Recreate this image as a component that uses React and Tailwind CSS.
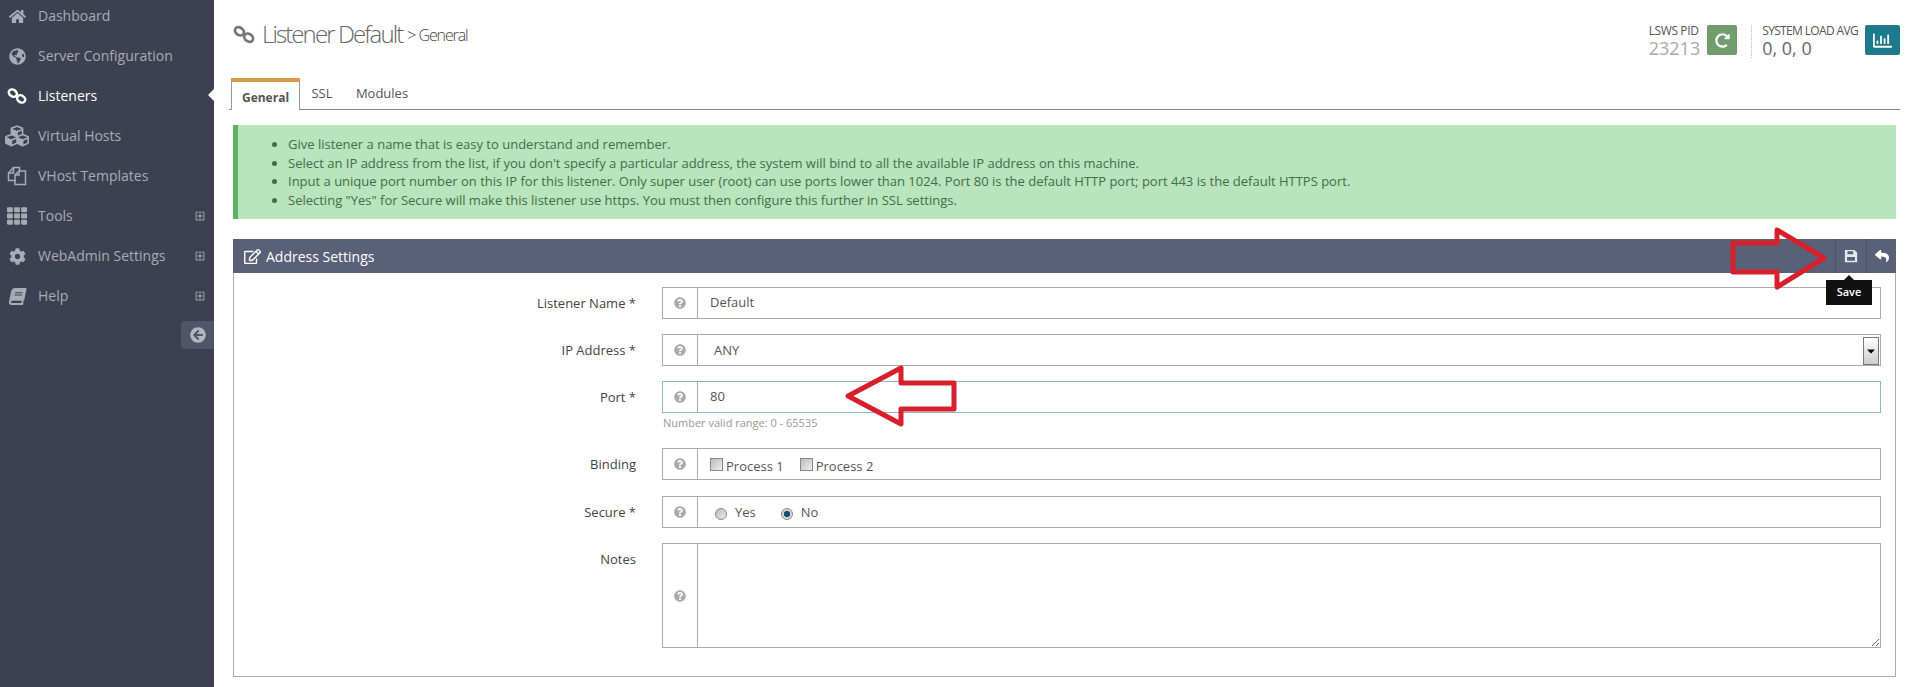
import {
  FaHome, FaGlobeAmericas, FaCubes, FaTh, FaCog, FaBook,
  FaRegPlusSquare, FaArrowCircleLeft, FaRedoAlt, FaRegChartBar, FaRegEdit,
  FaReply, FaQuestionCircle, FaCaretDown,
} from 'react-icons/fa'

// Chain running top-left to bottom-right, the package's link icon leans the other way
function ChainIcon({ className }) {
  return (
    <svg className={className} viewBox="0 0 24 20" fill="none" stroke="currentColor" strokeWidth="3">
      <ellipse cx="7" cy="6.5" rx="5.2" ry="4" transform="rotate(35 7 6.5)" />
      <ellipse cx="17" cy="13.5" rx="5.2" ry="4" transform="rotate(35 17 13.5)" />
    </svg>
  )
}

function TemplatesIcon({ className }) {
  return (
    <svg className={className} viewBox="0 0 20 20" fill="none" stroke="currentColor" strokeWidth="1.5">
      <path d="M9 14.5 H1.5 V7 L6.5 1.5 H12.5 V5" />
      <path d="M1.5 7 H6.5 V1.5" />
      <path d="M8 9 L12 5 H18.5 V18.5 H8 Z" />
      <path d="M8 9 H12 V5" />
    </svg>
  )
}

function SaveIcon({ className }) {
  return (
    <svg className={className} viewBox="0 0 16 16" fill="currentColor" fillRule="evenodd">
      <path d="M1 1 H12 L15 4 V15 H1 Z M4 2.5 V6 H10.5 V2.5 Z M3.5 9 V13.5 H12.5 V9 Z" />
    </svg>
  )
}

const NAV_ITEMS = [
  { label: 'Dashboard', icon: FaHome, size: 'text-[17px]' },
  { label: 'Server Configuration', icon: FaGlobeAmericas, size: 'text-[17px]' },
  { label: 'Listeners', icon: ChainIcon, size: 'w-[20px] h-[18px]', active: true },
  { label: 'Virtual Hosts', icon: FaCubes, size: 'text-[24px]' },
  { label: 'VHost Templates', icon: TemplatesIcon, size: 'w-[20px] h-[20px]' },
  { label: 'Tools', icon: FaTh, size: 'text-[20px]', expand: true },
  { label: 'WebAdmin Settings', icon: FaCog, size: 'text-[17px]', expand: true },
  { label: 'Help', icon: FaBook, size: 'text-[17px] -skew-x-12', expand: true },
]

const TIPS = [
  'Give listener a name that is easy to understand and remember.',
  "Select an IP address from the list, if you don't specify a particular address, the system will bind to all the available IP address on this machine.",
  'Input a unique port number on this IP for this listener. Only super user (root) can use ports lower than 1024. Port 80 is the default HTTP port; port 443 is the default HTTPS port.',
  'Selecting "Yes" for Secure will make this listener use https. You must then configure this further in SSL settings.',
]

function Sidebar() {
  return (
    <aside className="w-[214px] shrink-0 bg-[#3c4051] h-[687px] overflow-hidden relative">
      <ul className="-mt-1">
        {NAV_ITEMS.map((item) => {
          const Icon = item.icon
          return (
            <li key={item.label} className={`relative flex items-center h-10 ${item.active ? 'text-white' : 'text-[#a9acb5]'}`}>
              <span className="w-[38px] shrink-0 flex justify-center pr-[4px]">
                <Icon className={item.size} />
              </span>
              <span className="text-[14px] leading-none">{item.label}</span>
              {item.expand && <FaRegPlusSquare className="absolute left-[195px] text-[10px]" />}
              {item.active && (
                <span className="absolute right-0 top-[13px] border-y-[6px] border-r-[6px] border-y-transparent border-r-white" />
              )}
            </li>
          )
        })}
      </ul>
      <div className="flex justify-end mt-[5px]">
        <div className="w-[33px] h-[28px] bg-[#50556a] rounded-l flex items-center justify-center text-[#b4b7c0]">
          <FaArrowCircleLeft className="text-[16px]" />
        </div>
      </div>
    </aside>
  )
}

function TopStats() {
  return (
    <div className="flex items-start pt-[25px] -mr-[4px]">
      <div className="mr-[7px]">
        <div className="text-[12px] leading-[12px] text-[#555] -tracking-[0.4px]">LSWS PID</div>
        <div className="text-[18px] leading-[22px] text-[#aaa]">23213</div>
      </div>
      <div className="w-[30px] h-[30px] bg-[#6f9e6c] rounded-[2px] flex items-center justify-center text-white">
        <FaRedoAlt className="text-[15px]" />
      </div>
      <div className="w-0 h-[33px] border-l border-dotted border-[#bbb] ml-[14px] mr-[10px]" />
      <div className="mr-[7px]">
        <div className="text-[12px] leading-[12px] text-[#555] -tracking-[0.65px]">SYSTEM LOAD AVG</div>
        <div className="text-[18px] leading-[22px] text-[#666]">0, 0, 0</div>
      </div>
      <div className="w-[35px] h-[30px] bg-[#1e7b8e] rounded-[2px] flex items-center justify-center text-white">
        <FaRegChartBar className="text-[19px]" />
      </div>
    </div>
  )
}

function HelpAddon() {
  return (
    <span className="w-[35px] shrink-0 flex items-center justify-center text-[#aaa] border-r border-[#aaa]">
      <FaQuestionCircle className="text-[12px]" />
    </span>
  )
}

function Field({ label, children, focused, hint, tall, gap = 'mb-[15px]' }) {
  return (
    <div className={`flex ${gap}`}>
      <label className="w-[402px] shrink-0 text-right text-[13px] text-[#444] pt-[6px] leading-[20px]">{label}</label>
      <div className="flex-1 ml-[26px]">
        <div className={`flex border ${focused ? 'border-[#8db8c9]' : 'border-[#aaa]'} bg-white ${tall ? 'h-[105px]' : 'h-[32px]'}`}>
          <HelpAddon />
          {children}
        </div>
        {hint && <div className="text-[11px] text-[#999] leading-[20px] pl-[1px]">{hint}</div>}
      </div>
    </div>
  )
}

function AddressPanel() {
  return (
    <section className="mt-[20px] border border-[#aab] border-t-0 relative">
      <header className="h-[34px] bg-[#5a6078] flex items-center text-white -mx-px">
        <FaRegEdit className="text-[17px] ml-[11px] mr-[5px]" />
        <span className="text-[14px] flex-1">Address Settings</span>
        <span className="w-[31px] h-full border-l border-[#4c5168] flex items-center justify-center text-[#e6e7ec]">
          <SaveIcon className="w-[14px] h-[14px]" />
        </span>
        <span className="w-[30px] h-full border-l border-[#4c5168] flex items-center justify-center">
          <FaReply className="text-[14px]" />
        </span>
      </header>
      <div className="pt-[14px] pr-[14px] pb-[13px]">
        <Field label="Listener Name *">
          <input readOnly value="Default" className="flex-1 px-3 text-[13px] text-[#555] outline-none" />
        </Field>
        <Field label="IP Address *">
          <div className="flex-1 flex items-center justify-between text-[13px] text-[#555] pl-4 pt-[1px]">
            <span>ANY</span>
            <span className="w-[16px] h-[28px] mr-[1px] border border-[#777] bg-gradient-to-b from-white to-[#ccc] flex items-center justify-center text-black">
              <FaCaretDown className="text-[12px]" />
            </span>
          </div>
        </Field>
        <Field label="Port *" focused hint="Number valid range: 0 - 65535">
          <input readOnly value="80" className="flex-1 px-3 text-[13px] text-[#555] outline-none" />
        </Field>
        <Field label="Binding" gap="mb-[16px]">
          <div className="flex-1 flex items-center gap-[16px] pl-[12px] text-[13px] text-[#555] pt-[5px]">
            <label className="flex items-center gap-[3px]">
              <input type="checkbox" readOnly className="appearance-none w-[13px] h-[13px] -mt-[4px] border border-[#888] bg-gradient-to-br from-[#bbb] to-[#eee]" /> Process 1
            </label>
            <label className="flex items-center gap-[3px]">
              <input type="checkbox" readOnly className="appearance-none w-[13px] h-[13px] -mt-[4px] border border-[#888] bg-gradient-to-br from-[#bbb] to-[#eee]" /> Process 2
            </label>
          </div>
        </Field>
        <Field label="Secure *">
          <div className="flex-1 flex items-center pl-[17px] text-[13px] text-[#555] pt-[2px]">
            <label className="flex items-center gap-[8px] mr-[25px]">
              <input type="radio" name="secure" readOnly className="appearance-none w-[12px] h-[12px] mt-[2px] rounded-full border border-[#888] bg-gradient-to-br from-[#bbb] to-[#eee]" /> Yes
            </label>
            <label className="flex items-center gap-[8px]">
              <input type="radio" name="secure" readOnly defaultChecked className="appearance-none w-[12px] h-[12px] mt-[2px] rounded-full border border-[#888] bg-[radial-gradient(circle,#17506f_40%,#d5d5d5_50%)]" /> No
            </label>
          </div>
        </Field>
        <Field label="Notes" tall>
          <textarea readOnly className="flex-1 outline-none resize-y" />
        </Field>
      </div>
      {/* tooltip over the save button */}
      <div className="absolute left-[1592px] top-[41px] w-[46px] h-[25px] bg-[#111] text-white text-[11px] font-semibold flex items-center justify-center">
        Save
        <span className="absolute left-[18px] -top-[5px] border-x-[5px] border-b-[5px] border-x-transparent border-b-[#111]" />
      </div>
    </section>
  )
}

// Red annotation arrows drawn on top of the screenshot
function Arrows() {
  return (
    <svg className="absolute left-0 top-0 pointer-events-none" width="1908" height="687" fill="none" stroke="#d8202c" strokeWidth="5" strokeLinejoin="round">
      <path d="M1733 243 H1777 V230 L1824 258 L1777 287 V272 H1733 Z" />
      <path d="M848 396 L901 368 V383 H954 V409 H901 V424 Z" />
    </svg>
  )
}

export default function App() {
  return (
    <div className="relative flex w-[1908px] h-[687px] overflow-hidden bg-white font-['Open_Sans',sans-serif]">
      <Sidebar />
      <main className="flex-1 min-w-0 pl-[19px] pr-[12px]">
        <div className="flex justify-between h-[78px]">
          <h1 className="flex items-center h-[68px] text-[#666] font-light">
            <ChainIcon className="w-[22px] h-[19px] mr-[7px] text-[#777]" />
            <span className="text-[24px] -tracking-[1.9px]">Listener Default</span>
            <span className="text-[16px] text-[#444] ml-[5px] mt-[2px] -tracking-[1.1px]">&gt; General</span>
          </h1>
          <TopStats />
        </div>

        <nav className="flex items-end h-[32px] border-b border-[#888] -ml-[4px] -mr-[4px] text-[13px] text-[#555]">
          <span className="w-[69px] h-[32px] ml-[2px] -mb-px bg-white border-x border-[#999] border-t-[4px] border-t-[#e09a45] font-bold text-center pt-[7px] text-[12px]">General</span>
          <span className="w-[44px] text-center pb-[6px]">SSL</span>
          <span className="w-[76px] text-center pb-[6px]">Modules</span>
        </nav>

        <div className="mt-[15px] h-[94px] bg-[#b9e4bc] border-l-[5px] border-[#5cb264] text-[13px] leading-[18.7px] text-[#3f6f4a] pt-[10px] pl-[40px]">
          <ul className="list-disc pl-[10px]">
            {TIPS.map((tip) => <li key={tip}>{tip}</li>)}
          </ul>
        </div>

        <AddressPanel />
      </main>
      <Arrows />
    </div>
  )
}
